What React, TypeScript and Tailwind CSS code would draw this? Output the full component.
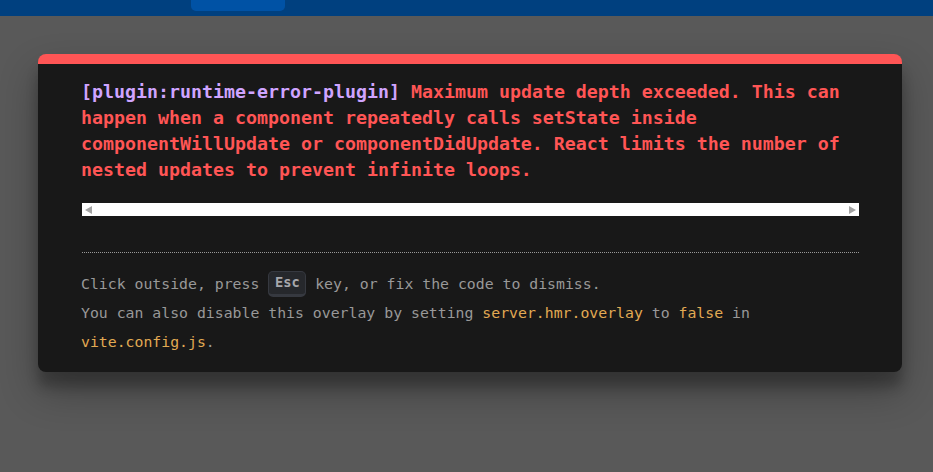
import React from "react";

const mono = "font-['DejaVu_Sans_Mono','Liberation_Mono',monospace]";

export default function App() {
  return (
    <div className="w-[933px] h-[472px] bg-[#595959] overflow-hidden flex flex-col">
      {/* top app bar (behind the backdrop) */}
      <div className="h-[16px] bg-[#00407f] shrink-0 flex">
        <div className="ml-[191px] w-[94px] h-[11px] rounded-b-[5px] bg-[#0052a5]" />
      </div>

      {/* overlay window */}
      <div className="ml-[38px] mt-[38px] w-[864px] rounded-[8px] overflow-hidden bg-[#181818] border-t-[10px] border-[#ff5555] shadow-[0_19px_38px_rgba(0,0,0,0.30),0_15px_12px_rgba(0,0,0,0.22)] px-[44px] pt-[15px] pb-[15px]">
        <div className={`${mono} -ml-[1px] text-[18.27px] leading-[26px] font-semibold text-[#ff5555] whitespace-nowrap`}>
          <span className="text-[#cfa4ff]">[plugin:runtime-error-plugin]</span> Maximum update depth exceeded. This can
          <br />
          happen when a component repeatedly calls setState inside
          <br />
          componentWillUpdate or componentDidUpdate. React limits the number of
          <br />
          nested updates to prevent infinite loops.
        </div>

        {/* empty frame with horizontal scrollbar */}
        <div className="mt-[20px] h-[13px] w-[777px] bg-white flex items-center justify-between px-[3px]">
          <svg width="7" height="8" viewBox="0 0 7 8">
            <path d="M7 0 L0 4 L7 8 Z" fill="#a3a3a3" />
          </svg>
          <svg width="7" height="8" viewBox="0 0 7 8">
            <path d="M0 0 L7 4 L0 8 Z" fill="#a3a3a3" />
          </svg>
        </div>

        <div className={`mt-[36px] w-[777px] border-t border-dotted border-[#999999] pt-[16px] ${mono} text-[14.82px] leading-[29px] text-[#999999] whitespace-nowrap`}>
          <div className="-ml-[1px]">
            Click outside, press{" "}
            <span className="inline-flex items-center justify-center align-middle w-[38px] h-[26px] -mt-[2px] rounded-[5px] bg-[#26282c] border border-[#363940] border-b-[3px] text-[#a6a7ab] font-bold text-[13.7px] leading-none">
              Esc
            </span>{" "}
            key, or fix the code to dismiss.
          </div>
          <div className="-ml-[1px]">
            You can also disable this overlay by setting{" "}
            <span className="text-[#e2aa53]">server.hmr.overlay</span> to{" "}
            <span className="text-[#e2aa53]">false</span> in
          </div>
          <div className="-ml-[1px] pb-[1px]">
            <span className="text-[#e2aa53]">vite.config.js</span>.
          </div>
        </div>
      </div>
    </div>
  );
}
